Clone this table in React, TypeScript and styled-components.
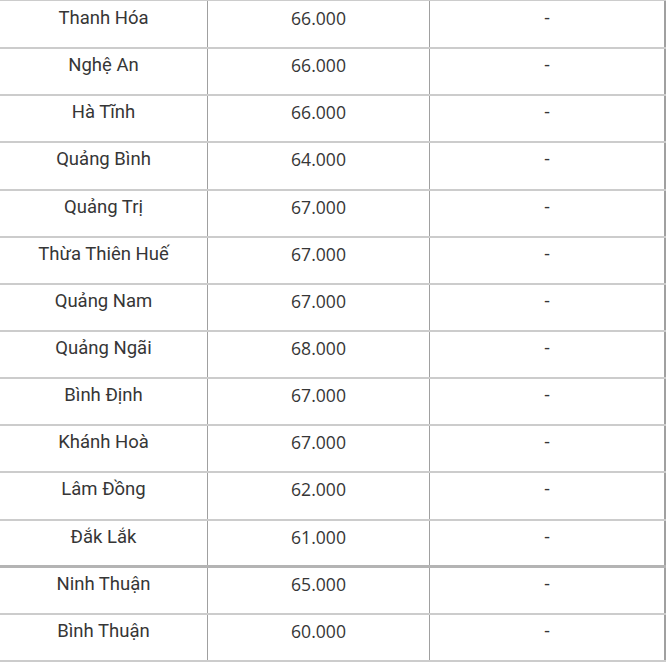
import React from "react";
import styled, { createGlobalStyle } from "styled-components";

const Global = createGlobalStyle`
  html, body { margin: 0; padding: 0; background: #fff; }
  body { overflow: hidden; }
`;

const Wrap = styled.div`
  width: 666px;
  border-top: 1px solid #cccccc;
`;

const Cell = styled.div<{ $num?: boolean; $last?: boolean }>`
  box-sizing: border-box;
  border-right: ${(p) => (p.$last ? "2px solid #a0a0a0" : "1px solid #a0a0a0")};
  text-align: center;
  padding-top: 3px;
  font-family: ${(p) => (p.$num ? `"Open Sans", Roboto, sans-serif` : `Roboto, "Noto Sans", sans-serif`)};
  font-size: ${(p) => (p.$num ? 17.6 : 18.5)}px;
  line-height: 27px;
  color: #363636;
`;

const Row = styled.div<{ $thick?: boolean }>`
  display: grid;
  grid-template-columns: 208px 222px 236px;
  height: 47.15px;
  box-sizing: border-box;
  border-bottom: ${(p) => (p.$thick ? "3px solid #b4b4b4" : "2px solid #cccccc")};

  &:first-child {
    height: 48.15px;
  }
  &:first-child ${Cell} {
    padding-top: 4px;
  }
`;

const rows: [string, string][] = [
  ["Thanh Hóa", "66.000"],
  ["Nghệ An", "66.000"],
  ["Hà Tĩnh", "66.000"],
  ["Quảng Bình", "64.000"],
  ["Quảng Trị", "67.000"],
  ["Thừa Thiên Huế", "67.000"],
  ["Quảng Nam", "67.000"],
  ["Quảng Ngãi", "68.000"],
  ["Bình Định", "67.000"],
  ["Khánh Hoà", "67.000"],
  ["Lâm Đồng", "62.000"],
  ["Đắk Lắk", "61.000"],
  ["Ninh Thuận", "65.000"],
  ["Bình Thuận", "60.000"],
];

export default function App() {
  return (
    <>
      <Global />
      <Wrap>
        {rows.map(([name, price]) => (
          <Row key={name} $thick={name === "Đắk Lắk"}>
            <Cell>{name}</Cell>
            <Cell $num>{price}</Cell>
            <Cell $last>-</Cell>
          </Row>
        ))}
      </Wrap>
    </>
  );
}
